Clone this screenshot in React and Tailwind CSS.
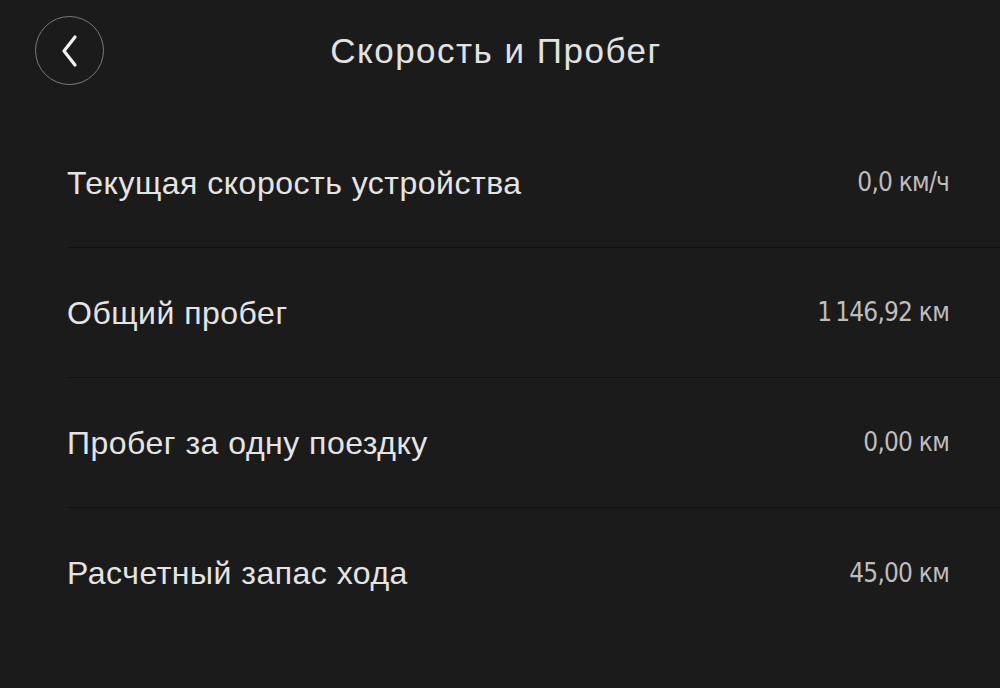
const rows = [
  { label: 'Текущая скорость устройства', value: '0,0 км/ч' },
  { label: 'Общий пробег', value: '1\u2009146,92 км' },
  { label: 'Пробег за одну поездку', value: '0,00 км' },
  { label: 'Расчетный запас хода', value: '45,00 км' },
];

export default function App() {
  return (
    <div className="min-h-[688px] w-full bg-[#1b1b1b] font-['Liberation_Sans',Arial,sans-serif]">
      <div className="grid h-[101px] grid-cols-[1fr_auto_1fr] items-center">
        <div className="pl-[35px]">
          <button className="flex h-[69px] w-[69px] items-center justify-center rounded-full border-[1.5px] border-[#7a7a7a]">
            <svg width="22" height="34" viewBox="0 0 22 34" fill="none">
              <path d="M16 3 L5 17 L16 31" stroke="#f2f2f2" strokeWidth="3.2" strokeLinecap="round" strokeLinejoin="round" />
            </svg>
          </button>
        </div>
        <h1 className="pr-[8px] text-[35px] leading-none tracking-[1.5px] text-[#e2e2e2]">Скорость и Пробег</h1>
        <div />
      </div>

      <div className="ml-[67px] mt-[17px]">
        {rows.map((r, i) => (
          <div
            key={r.label}
            className={`flex h-[130px] items-center justify-between pr-[51px] ${
              i < rows.length - 1 ? 'border-b border-[#111111]' : ''
            }`}
          >
            <span className="text-[32px] tracking-[0.5px] text-[#e4e4e4]">{r.label}</span>
            <span className="font-['DejaVu_Sans_Condensed','DejaVu_Sans',sans-serif] text-[26px] tracking-[-0.8px] text-[#bdbdbd] [font-stretch:condensed]">
              {r.value}
            </span>
          </div>
        ))}
      </div>
    </div>
  );
}
